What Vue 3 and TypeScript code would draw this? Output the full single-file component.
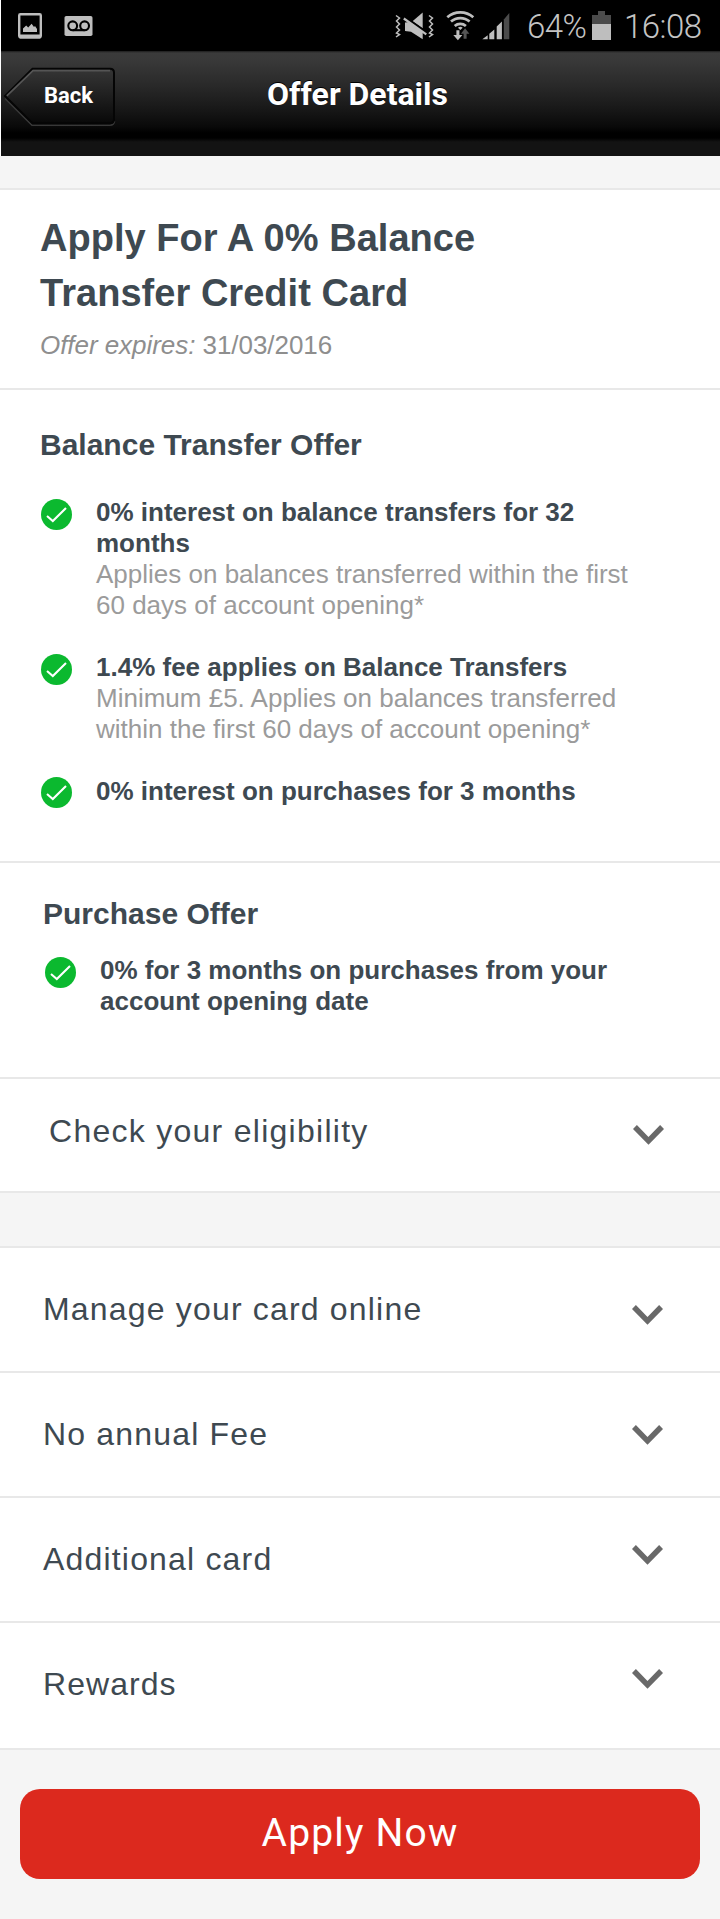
<script setup lang="ts">
interface Benefit {
  title: string
  note?: string
}

const transferBenefits: Benefit[] = [
  {
    title: '0% interest on balance transfers for 32 months',
    note: 'Applies on balances transferred within the first 60 days of account opening*',
  },
  {
    title: '1.4% fee applies on Balance Transfers',
    note: 'Minimum £5. Applies on balances transferred within the first 60 days of account opening*',
  },
  { title: '0% interest on purchases for 3 months' },
]

const purchaseBenefits: Benefit[] = [
  { title: '0% for 3 months on purchases from your account opening date' },
]

const panels: { label: string; kind: string }[] = [
  { label: 'Manage your card online', kind: 'manage' },
  { label: 'No annual Fee', kind: 'fee' },
  { label: 'Additional card', kind: 'additional' },
  { label: 'Rewards', kind: 'rewards' },
]
</script>

<template>
  <div class="screen">
    <div class="status">
      <svg class="ico-left" width="76" height="27" viewBox="0 0 76 27">
        <rect x="1.2" y="1.2" width="21.6" height="23" rx="1.2" fill="none" stroke="#bebebe" stroke-width="2.4" />
        <rect x="1" y="21.5" width="22" height="4" rx="1" fill="#bebebe" />
        <path d="M5 19v-3.5l3.2-3 2 2 3.4-3.8L16 14l1-1 2 3v3z" fill="#bebebe" />
        <rect x="46.5" y="3" width="28" height="20" rx="1.8" fill="#bebebe" />
        <g fill="none" stroke="#000" stroke-width="2.1">
          <circle cx="54.7" cy="12.8" r="4.4" />
          <circle cx="66.6" cy="12.8" r="4.4" />
          <path d="M54.7 17.2h11.9" />
        </g>
      </svg>
      <svg class="ico-right" width="118" height="32" viewBox="0 0 118 32">
        <g fill="none" stroke="#bebebe" stroke-width="1.5">
          <path d="M2 5.500l3.500 2.500-3 3 3 3-3 3 3 3-3 3 3 1.500-3.500 2.500" />
          <path d="M35 5.500l3.500 2.500-3 3 3 3-3 3 3 3-3 3 3 1.500-3.500 2.500" />
        </g>
        <path d="M18.500 11.300L28.700 2.500v16z" fill="#bebebe" />
        <path d="M11 12.500v8.500l6 .7 11.700 7.500v-7.500L16 12z" fill="#bebebe" />
        <path d="M12 7.400l22 15.600" stroke="#000" stroke-width="1.600" />
        <path d="M9.800 8.500l22.500 15.800" stroke="#bebebe" stroke-width="2.200" />
        <g fill="none" stroke="#bebebe" stroke-width="2.700">
          <path d="M53.300 7.300a19.500 19.500 0 0 1 26 0" />
          <path d="M57 11.600a14 14 0 0 1 18.600 0" />
          <path d="M60.700 15.900a8.500 8.500 0 0 1 11.200 0" />
        </g>
        <path d="M63.900 17.800a3.600 3.600 0 0 1 4.800 0l-2.400 2.200z" fill="#bebebe" />
        <path d="M62.400 20.300h3v4.700h3l-4.500 5.300-4.600-5.300h3.100z" fill="#bebebe" />
        <path d="M71.100 18.300l4.300 5.500h-2.800v5h-3v-5h-2.700z" fill="#555" />
        <path d="M88.300 29.300l5.400-4v4zM95.300 23.800l5-4.300v9.800h-5zM102.700 16.500l5.200-5v17.800h-5.200z" fill="#bebebe" />
        <path d="M109.800 9.500l5.500-6.500v26.300h-5.500z" fill="#4b4b4b" />
      </svg>
      <span class="percent">64%</span>
      <svg class="battery" width="19" height="29" viewBox="0 0 19 29">
        <path d="M6 0h7v4h6v9H0V4h6z" fill="#4b4b4b" />
        <path d="M0 13h19v16H0z" fill="#bebebe" />
      </svg>
      <span class="clock">16:08</span>
    </div>

    <header class="bar">
      <a class="back">
        <svg class="back-shape" width="114" height="60" viewBox="0 0 114 60">
          <defs>
            <linearGradient id="backFill" x1="0" y1="0" x2="0" y2="1">
              <stop offset="0" stop-color="#363636" />
              <stop offset="1" stop-color="#080808" />
            </linearGradient>
          </defs>
          <path d="M2 31.500L29 58.200h78q4 0 4.500-4" fill="none" stroke="#383838" stroke-width="1.600" />
          <path d="M29.500 1.700h77.500q4 0 4 4v46.500q0 4-4 4H29.500L2 29z" fill="url(#backFill)" stroke="#050505" stroke-width="2" />
          <path d="M3.800 28.800L30 3.700h77" fill="none" stroke="#555" stroke-width="1.700" />
        </svg>
        <span class="back-label">Back</span>
      </a>
      <h1 class="bar-title">Offer Details</h1>
    </header>

    <div class="gap-top"></div>

    <section class="intro">
      <h2 class="title">Apply For A 0% Balance<br />Transfer Credit Card</h2>
      <p class="expires"><em>Offer expires:</em> 31/03/2016</p>
    </section>

    <section class="offer transfer">
      <h3 class="heading">Balance Transfer Offer</h3>
      <ul class="benefits">
        <li v-for="b in transferBenefits" :key="b.title" class="benefit">
          <svg class="tick" width="31" height="31" viewBox="0 0 31 31">
            <circle cx="15.5" cy="15.5" r="15.5" fill="#0bb92f" />
            <path d="M6 17l5.800 5L25 9" fill="none" stroke="#fff" stroke-width="2.100" />
          </svg>
          <div>
            <strong class="benefit-title">{{ b.title }}</strong>
            <p v-if="b.note" class="benefit-note">{{ b.note }}</p>
          </div>
        </li>
      </ul>
    </section>

    <section class="offer purchase">
      <h3 class="heading">Purchase Offer</h3>
      <ul class="benefits">
        <li v-for="b in purchaseBenefits" :key="b.title" class="benefit">
          <svg class="tick" width="31" height="31" viewBox="0 0 31 31">
            <circle cx="15.5" cy="15.5" r="15.5" fill="#0bb92f" />
            <path d="M6 17l5.800 5L25 9" fill="none" stroke="#fff" stroke-width="2.100" />
          </svg>
          <strong class="benefit-title">{{ b.title }}</strong>
        </li>
      </ul>
    </section>

    <button class="row eligibility">
      <span>Check your eligibility</span>
      <svg class="chevron" width="31" height="20" viewBox="0 0 31 20">
        <path d="M0 3.900L3.900 0l11.600 12L27.100 0 31 3.900 15.500 19.800z" fill="#696969" />
      </svg>
    </button>

    <div class="gap-mid"></div>

    <button v-for="p in panels" :key="p.kind" class="row" :class="p.kind">
      <span>{{ p.label }}</span>
      <svg class="chevron" width="31" height="20" viewBox="0 0 31 20">
        <path d="M0 3.900L3.900 0l11.600 12L27.100 0 31 3.900 15.500 19.800z" fill="#696969" />
      </svg>
    </button>

    <footer class="footer">
      <button class="apply">Apply Now</button>
    </footer>
  </div>
</template>

<style>
body {
  background: #fff;
}
</style>

<style scoped>
* {
  box-sizing: border-box;
  margin: 0;
  padding: 0;
}
.screen {
  width: 720px;
  height: 1919px;
  overflow: hidden;
  font-family: 'Liberation Sans', Arial, sans-serif;
  color: #3e4951;
}
.status {
  display: flex;
  align-items: flex-start;
  height: 51px;
  margin-left: 1px;
  background: #000;
  color: #c4c4c4;
  font-family: Roboto, sans-serif;
  font-weight: 300;
  font-size: 33px;
  letter-spacing: -0.5px;
  line-height: 54px;
  white-space: nowrap;
}
.ico-left {
  margin: 13px 0 0 17px;
}
.ico-right {
  margin: 10px 0 0 300px;
}
.percent {
  width: 65px;
  margin-left: 15px;
}
.battery {
  margin: 11px 0 0;
}
.clock {
  margin-left: 13px;
}
.bar {
  display: grid;
  grid-template-columns: 120px 1fr 126px;
  height: 105px;
  margin-left: 1px;
  background: linear-gradient(#1c1c1c 0, #3b3b3b 2px, #393939 9px, #2a2a2a 33px, #1b1b1b 54px, #090909 76px, #000 82px, #000 87px, #131313 91px, #131313 100%);
  color: #fff;
  font-family: Roboto, sans-serif;
  font-weight: 700;
}
.back {
  display: grid;
  height: 60px;
  margin: 16px 0 0 2px;
}
.back-shape,
.back-label {
  grid-area: 1 / 1;
}
.back-label {
  padding-left: 41px;
  font-size: 22px;
  line-height: 57px;
}
.bar-title {
  font-size: 32px;
  line-height: 86px;
  text-align: center;
  font-weight: 700;
  white-space: nowrap;
  text-shadow: 0 -1px 0 #000;
}
.gap-top {
  height: 34px;
  background: #f5f5f5;
  border-bottom: 2px solid #e8e8e8;
}
.intro {
  height: 200px;
  padding: 21px 0 0 40px;
  border-bottom: 2px solid #e8e8e8;
}
.title {
  font-size: 38px;
  line-height: 55px;
  letter-spacing: 0.04px;
}
.expires {
  margin-top: 4px;
  font-size: 26px;
  line-height: 40px;
  letter-spacing: -0.05px;
  color: #8e8e8e;
}
.offer {
  border-bottom: 2px solid #e8e8e8;
}
.transfer {
  height: 473px;
  padding: 37px 0 0 40px;
}
.transfer .benefits {
  margin-left: 1px;
}
.purchase {
  height: 216px;
  padding: 33px 0 0 43px;
}
.heading {
  font-size: 30px;
  line-height: 36px;
}
.benefits {
  display: flex;
  flex-direction: column;
  gap: 31px;
  margin-top: 34px;
  list-style: none;
  font-size: 26px;
  line-height: 31px;
}
.purchase .benefits {
  margin: 23px 0 0 2px;
}
.benefit {
  display: flex;
  gap: 24px;
  width: 600px;
}
.tick {
  flex: none;
  margin-top: 2px;
}
.benefit:nth-child(3) .tick {
  margin-top: 1px;
}
.benefit-title {
  display: block;
}
.benefit-note {
  color: #9b9b9b;
}
.row {
  display: flex;
  justify-content: space-between;
  align-items: flex-start;
  width: 720px;
  height: 125px;
  padding: 41px 57px 0 43px;
  border: 0;
  border-bottom: 2px solid #e8e8e8;
  background: #fff;
  color: #3e4951;
  font-family: inherit;
  font-size: 32px;
  line-height: 40px;
  letter-spacing: 1.18px;
  text-align: left;
}
.eligibility {
  height: 114px;
  padding: 32px 56px 0 49px;
  letter-spacing: 1.27px;
}
.eligibility .chevron {
  margin-top: 14px;
}
.gap-mid {
  height: 55px;
  background: #f5f5f5;
  border-bottom: 2px solid #e8e8e8;
}
.manage .chevron {
  margin-top: 16px;
}
.fee .chevron {
  margin-top: 11px;
}
.additional .chevron {
  margin-top: 6px;
}
.rewards {
  height: 127px;
  letter-spacing: 1.05px;
}
.rewards .chevron {
  margin-top: 5px;
}
.footer {
  height: 169px;
  padding: 39px 20px 0;
  background: #f5f5f5;
}
.apply {
  display: block;
  width: 680px;
  height: 90px;
  padding-bottom: 2px;
  border: 0;
  border-radius: 20px;
  background: #dc291e;
  color: #fff;
  font-family: Roboto, sans-serif;
  font-size: 39px;
  letter-spacing: 1.2px;
}
</style>
